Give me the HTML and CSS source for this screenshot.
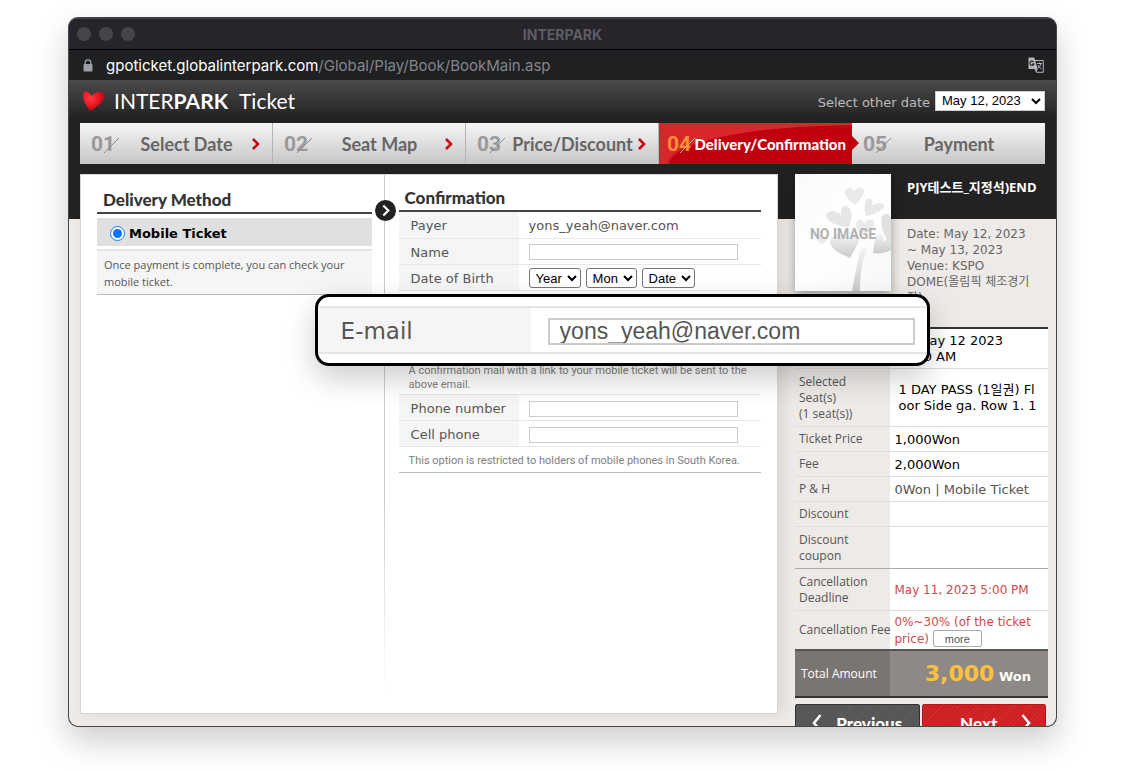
FILE: index.html
```html
<!DOCTYPE html>
<html lang="en">
<head>
<meta charset="UTF-8">
<title>INTERPARK</title>
<link rel="stylesheet" href="styles.css">
</head>
<body>
<div class="window">
	<div class="titlebar">
		<div class="dots"><i></i><i></i><i></i></div>
		<b>INTERPARK</b>
	</div>
	<div class="urlbar">
		<svg class="lock" width="10" height="13" viewBox="0 0 10 13"><path d="M2.2 6V3.6a2.8 2.8 0 0 1 5.6 0V6" fill="none" stroke="#9aa0a6" stroke-width="1.3"/><rect x="0.5" y="5" width="9" height="7.5" rx="1" fill="#9aa0a6"/></svg>
		<span class="url"><span class="domain">gpoticket.globalinterpark.com</span>/Global/Play/Book/BookMain.asp</span>
		<svg class="translate" width="16" height="16" viewBox="0 0 16 16"><path d="M7 3.5h8.3v11.8H8.5L7 12" fill="none" stroke="#b4b6b8" stroke-width="1"/><path d="M0.5 0.5h5.8l3.4 11.5H0.5z" fill="#b4b6b8"/><path d="M9.7 12L8.3 15l-1.2-3z" fill="#b4b6b8"/><path d="M5.6 4.8A2.1 2.1 0 1 0 6 7H4" fill="none" stroke="#1f2022" stroke-width="1.1"/><path d="M9 6.5h5M11.5 5.5v1M13 6.5c-.5 2-1.500 3.500-3 4.500M10 8c.8 1.800 2 3 3.500 4" fill="none" stroke="#b4b6b8" stroke-width="1"/></svg>
	</div>

	<div class="page">
		<div class="header">
			<svg class="heart" width="24" height="22" viewBox="0 0 24 22">
				<defs><radialGradient id="hg" cx="0.35" cy="0.35" r="0.75"><stop offset="0" stop-color="#ff3a40"/><stop offset="0.6" stop-color="#e3101c"/><stop offset="1" stop-color="#9c0710"/></radialGradient></defs>
				<path d="M8.500 21C4 15.500 0.500 10 1 4.500 1.300 0 6.500 0 9.500 6 12.500 2 19 0.500 22 3.500 25.500 8.500 17 15.500 8.500 21z" fill="url(#hg)"/>
			</svg>
			<div class="logo">INTER<b>PARK</b></div>
			<div class="logo-sub">Ticket</div>
			<label class="other" for="otherdate">Select other date</label>
			<select class="otherdate" id="otherdate"><option>May 12, 2023</option></select>
		</div>

		<div class="steps">
			<div class="step">
				<span class="num">01<svg width="17" height="17" viewBox="0 0 17 17"><path d="M1 16L16 1"/></svg></span>
				<span class="name">Select Date</span>
				<svg class="arrow" width="8" height="12" viewBox="0 0 8 12"><path d="M1 1l5 5-5 5"/></svg>
			</div>
			<div class="step">
				<span class="num">02<svg width="17" height="17" viewBox="0 0 17 17"><path d="M1 16L16 1"/></svg></span>
				<span class="name">Seat Map</span>
				<svg class="arrow" width="8" height="12" viewBox="0 0 8 12"><path d="M1 1l5 5-5 5"/></svg>
			</div>
			<div class="step">
				<span class="num">03<svg width="17" height="17" viewBox="0 0 17 17"><path d="M1 16L16 1"/></svg></span>
				<span class="name">Price/Discount</span>
				<svg class="arrow" width="8" height="12" viewBox="0 0 8 12"><path d="M1 1l5 5-5 5"/></svg>
			</div>
			<div class="step active">
				<span class="num">04<svg width="17" height="17" viewBox="0 0 17 17"><path d="M1 16L16 1"/></svg></span>
				<span class="name">Delivery/Confirmation</span>
			</div>
			<div class="step">
				<span class="num">05<svg width="17" height="17" viewBox="0 0 17 17"><path d="M1 16L16 1"/></svg></span>
				<span class="name">Payment</span>
			</div>
		</div>

		<div class="main">
			<div class="panel">
				<div class="delivery">
					<h2>Delivery Method</h2>
					<div class="method">
						<input type="radio" name="delivery" id="mobile" checked>
						<label for="mobile">Mobile Ticket</label>
					</div>
					<p class="method-note">Once payment is complete, you can check your mobile ticket.</p>
				</div>
				<div class="confirm">
					<svg class="next-mark" width="21" height="21" viewBox="0 0 21 21"><circle cx="10.500" cy="10.500" r="10.500" fill="#222"/><path d="M8.300 5.500l5 5-5 5" fill="none" stroke="#fff" stroke-width="2.200"/></svg>
					<h2>Confirmation</h2>
					<table class="form">
						<tr><th>Payer</th><td>yons_yeah@naver.com</td></tr>
						<tr><th><label for="uname">Name</label></th><td><input type="text" id="uname"></td></tr>
						<tr>
							<th><label for="year">Date of Birth</label></th>
							<td>
								<div class="birth">
									<select id="year"><option>Year</option></select>
									<select id="mon" aria-label="Month"><option>Mon</option></select>
									<select id="date" aria-label="Date"><option>Date</option></select>
								</div>
							</td>
						</tr>
						<tr class="email-row">
							<td colspan="2">
								<div class="callout">
									<div class="callout-row">
										<label for="email">E-mail</label>
										<div class="callout-field"><input type="text" id="email" value="yons_yeah@naver.com"></div>
									</div>
								</div>
							</td>
						</tr>
						<tr class="hint"><td colspan="2">A confirmation mail with a link to your mobile ticket will be sent to the above email.</td></tr>
						<tr><th><label for="phone">Phone number</label></th><td><input type="text" id="phone"></td></tr>
						<tr><th><label for="cell">Cell phone</label></th><td><input type="text" id="cell"></td></tr>
						<tr class="hint last"><td colspan="2">This option is restricted to holders of mobile phones in South Korea.</td></tr>
					</table>
				</div>
			</div>

			<div class="side">
				<div class="show">
					<svg class="poster" width="96" height="117" viewBox="0 0 96 117">
						<defs>
							<linearGradient id="pg" x1="0" y1="0" x2="1" y2="1"><stop offset="0" stop-color="#f9fafa"/><stop offset="0.500" stop-color="#fff"/><stop offset="1" stop-color="#f6f7f8"/></linearGradient>
							<linearGradient id="lg" x1="0" y1="0" x2="0" y2="1"><stop offset="0" stop-color="#f4f4f4"/><stop offset="1" stop-color="#c8cacb"/></linearGradient>
						</defs>
						<rect width="96" height="117" fill="url(#pg)"/>
						<path d="M57 117C61 98 62 86 67 74h6C67 86 65 100 65 117z" fill="url(#lg)"/>
						<path d="M60 31C54 27 49 21 50 17c1-4 8-4 9 1 2-6 10-5 10-1 0 5-5 10-9 14z" fill="#e9e9e9"/>
						<path d="M71 42c-2-7-2-15 1-17 4-2 7 2 5 7 4-4 12-4 12 0s-9 8-18 10z" fill="#e8e8e8"/>
						<path d="M54 53C42 53 31 47 31 41c1-5 11-5 16 1-3-7 1-12 6-9 5 4 4 12 1 20z" fill="#e6e6e6"/>
						<path d="M67 62C61 57 60 50 62 47c3-3 6-1 7 3 2-5 9-6 10-2 1 5-6 11-12 14z" fill="#eaeaea"/>
						<path d="M96 72C88 62 84 46 88 41c3-2 6-1 8 2z" fill="#e0e0e0"/>
						<path d="M26 70C22 67 21 64 23 62c2-1 4 0 5 2 2-2 5-2 5 0s-4 5-7 6z" fill="#e9e9e9"/>
						<path d="M55 84C46 80 36 76 35 68c0-8 12-11 19-3 4-6 8-7 10-4 2 5-4 14-9 23z" fill="url(#lg)"/>
						<path d="M78 79C79 66 81 59 85 60c3 0 4 4 3 8 2-2 5-3 8-2v10c-6 3-12 4-18 3z" fill="url(#lg)"/>
						<text class="noimage" x="48" y="65" text-anchor="middle">NO IMAGE</text>
					</svg>
					<div class="show-info">
						<b>PJY테스트_지정석)END</b>
						<p>Date: May 12, 2023<br>~ May 13, 2023<br>Venue: KSPO<br>DOME(올림픽 체조경기<br>장)</p>
					</div>
				</div>
				<table class="summary">
					<tr class="r-date"><th>Date</th><td>Fri, May 12 2023<br>11:00 AM</td></tr>
					<tr class="r-seat"><th>Selected<br>Seat(s)<br>(1 seat(s))</th><td>1 DAY PASS (1일권) Fl<br>oor Side ga. Row 1. 1</td></tr>
					<tr><th>Ticket Price</th><td>1,000Won</td></tr>
					<tr><th>Fee</th><td>2,000Won</td></tr>
					<tr><th>P &amp; H</th><td class="grey">0Won | Mobile Ticket</td></tr>
					<tr><th>Discount</th><td></td></tr>
					<tr class="r-two r-group"><th>Discount<br>coupon</th><td></td></tr>
					<tr class="r-two"><th>Cancellation<br>Deadline</th><td class="red">May 11, 2023 5:00 PM</td></tr>
					<tr class="r-fee"><th>Cancellation Fee</th><td class="red">0%~30% (of the ticket<br>price) <button type="button" class="more">more</button></td></tr>
					<tr class="total"><th>Total Amount</th><td><span class="amount">3,000</span> Won</td></tr>
				</table>
				<div class="buttons">
					<button type="button" class="btn prev"><svg width="10" height="18" viewBox="0 0 10 18"><path d="M8.500 1L2 9l6.500 8"/></svg>Previous</button>
					<button type="button" class="btn next">Next<svg width="10" height="18" viewBox="0 0 10 18"><path d="M1.500 1L8 9l-6.500 8"/></svg></button>
				</div>
			</div>
		</div>
	</div>
</div>
</body>
</html>
```
FILE: styles.css
```css
*{
	box-sizing: border-box;
}
body{
	margin: 0;
	height: 100vh;
	padding: 17px 68px 44px;
	background: #fff;
	font-family: "DejaVu Sans", "Noto Sans CJK KR", sans-serif;
	font-size: 12px;
	color: #555;
}
h2, p{
	margin: 0;
}
table{
	width: 100%;
	border-collapse: collapse;
}
th{
	font-weight: normal;
	text-align: left;
}
select{
	font-family: "Liberation Sans", sans-serif;
	font-size: 13px;
	background-color: #fff;
	color: #000;
}

/* browser window */
.window{
	height: 100%;
	display: flex;
	flex-direction: column;
	border: 1px solid #45474a;
	border-top: 2px solid #3f4145;
	border-radius: 10px;
	overflow: hidden;
	background: #222;
	box-shadow: 0 14px 32px rgba(0,0,0,0.2);
}
.titlebar{
	position: relative;
	height: 31px;
	flex: none;
	display: flex;
	align-items: center;
	justify-content: center;
	background: #27242b;
	border-bottom: 1px solid #000;
	font-family: Inter, sans-serif;
	font-size: 14px;
	color: #5e5c63;
}
.dots{
	position: absolute;
	left: 8px;
	display: flex;
	gap: 8px;
}
.dots i{
	width: 14px;
	height: 14px;
	border-radius: 50%;
	background: #47444b;
}
.urlbar{
	height: 30px;
	flex: none;
	display: flex;
	align-items: center;
	gap: 13px;
	padding: 0 12px 0 14px;
	background: #1f2022;
	font-family: Inter, sans-serif;
	font-size: 15px;
	color: #84868a;
}
.domain{
	color: #fff;
}
.translate{
	margin-left: auto;
}

/* page */
.page{
	flex: 1;
	min-height: 0;
	display: flex;
	flex-direction: column;
	background: linear-gradient(#222 139px, #eeeae7 139px);
}
.header{
	height: 43px;
	flex: none;
	display: flex;
	align-items: center;
	padding: 0 11px 2px 13px;
	background: linear-gradient(#4a4a4a, #222 90%);
	color: #fff;
}
.logo, .logo-sub{
	font-family: Lato, sans-serif;
	font-size: 21px;
	margin-left: 8px;
}
.logo-sub{
	margin-left: 11px;
}
.other{
	margin-left: auto;
	margin-right: 5px;
	padding-top: 4px;
	font-size: 13px;
	color: #bbb;
}
.otherdate{
	width: 110px;
	height: 20px;
	padding: 0 0 0 2px;
	border: 1px solid #ccc;
	border-radius: 0;
}
.steps{
	flex: none;
	height: 41px;
	margin: 0 11px;
	display: grid;
	grid-template-columns: repeat(5, minmax(0, 1fr));
}
.step{
	position: relative;
	display: grid;
	grid-template-columns: 30px 1fr 8px;
	align-items: center;
	gap: 0 4px;
	padding: 0 12px 0 11px;
	background: linear-gradient(#f6f6f6, #c6c6c6);
	border-right: 1px solid #b4b4b4;
}
.step:last-child{
	border-right: none;
}
.num{
	font-family: Roboto, sans-serif;
	font-weight: bold;
	font-size: 21px;
	color: #999;
	display: flex;
	align-items: center;
}
.num svg{
	flex: none;
	margin-left: -12px;
	margin-top: 3px;
}
.num path{
	stroke: #888;
}
.name{
	font-family: Lato, sans-serif;
	font-weight: bold;
	font-size: 18px;
	text-align: center;
	white-space: nowrap;
	color: #666;
}
.arrow path{
	fill: none;
	stroke: #c8000f;
	stroke-width: 2.5;
}
.active{
	grid-template-columns: 27px 1fr;
	gap: 0;
	padding: 0 6px 0 8px;
	background: radial-gradient(ellipse 185px 39px at 100% 100%, #c0000f 98%, transparent 100%), #d8262c;
	border-right: none;
}
.active .num{
	color: #ff8f33;
}
.active .num path{
	stroke: #ffb46e;
}
.active .name{
	font-size: 15px;
	font-weight: 900;
	color: #fff;
	text-align: right;
}
.active::after{
	content: "";
	position: absolute;
	z-index: 1;
	left: 100%;
	top: 13px;
	border: 7px solid transparent;
	border-left-color: #c0000f;
	border-right: none;
}

/* content */
.main{
	flex: 1;
	min-height: 0;
	display: grid;
	grid-template-columns: 1fr 253px;
	grid-template-rows: minmax(0, 1fr);
	gap: 17px;
	padding: 10px 8px 12px 11px;
}
.panel{
	display: grid;
	grid-template-columns: 10fr 13fr;
	background: #fff;
	border: 1px solid #d9d8d6;
	box-shadow: 6px 0 12px rgba(0,0,0,0.08);
}
h2{
	font-family: Lato, sans-serif;
	font-weight: 900;
	font-size: 17px;
	line-height: 20px;
	color: #333;
}
.delivery{
	padding: 15px 12px 0 16px;
}
.delivery h2{
	padding: 0 6px 2px;
	border-bottom: 2px solid #444;
}
.method{
	display: flex;
	align-items: center;
	gap: 4px;
	height: 28px;
	margin-top: 4px;
	padding: 2px 0 0 13px;
	background: #e0e0e0;
	font-size: 13px;
	font-weight: bold;
	color: #000;
}
.method input{
	width: 15px;
	height: 15px;
	margin: 0;
	accent-color: #0a75ff;
}
.method-note{
	margin-top: 3px;
	padding: 5px 7px 4px;
	border-top: 2px solid #e4e4e4;
	border-bottom: 1px solid #bbb;
	background: #f5f5f5;
	font-family: "Open Sans", sans-serif;
	font-size: 11px;
	line-height: 17px;
}
.confirm{
	position: relative;
	padding: 13px 16px 0 14px;
	border-left: 1px solid;
	border-image: linear-gradient(#ccc 60%, #fff 96%) 1;
}
.next-mark{
	position: absolute;
	left: -10px;
	top: 25px;
}
.confirm h2{
	padding: 0 6px 2px;
	border-bottom: 2px solid #444;
}
.form tr{
	height: 26px;
	border-bottom: 1px solid #e6e6e6;
}
.form th{
	width: 120px;
	padding: 2px 12px 0;
	background: #f5f5f5;
	font-size: 13px;
}
.form td{
	padding: 2px 0 0 10px;
	font-size: 13px;
}
.form td > input{
	display: block;
	width: 209px;
	height: 16px;
	border: 1px solid #ccc;
}
.birth{
	display: flex;
	gap: 5px;
}
.birth select{
	height: 20px;
	padding: 0 1px 0 2px;
	border: 1px solid #767676;
	border-radius: 3px;
}
.form .email-row{
	height: 70px;
	border: none;
}
.form .hint td{
	padding: 4px 0 2px 10px;
	font-family: Roboto, sans-serif;
	font-size: 11px;
	line-height: 14px;
	color: #808080;
}
.form .last{
	border-bottom: 1px solid #bbb;
}

/* magnified e-mail row, lies over both columns */
.callout{
	position: absolute;
	z-index: 2;
	left: -70px;
	right: -153px;
	top: 119px;
	height: 72px;
	padding: 9px 0;
	border: 3px solid #000;
	border-radius: 14px;
	background: #fff;
	box-shadow: 0 12px 30px rgba(0,0,0,0.2);
}
.callout-row{
	display: grid;
	grid-template-columns: 213px 1fr;
	height: 48px;
	border: solid #e4e4e4;
	border-width: 2px 0;
}
.callout-row label{
	padding: 2px 0 0 23px;
	line-height: 42px;
	background: #f5f5f5;
	font-size: 23px;
}
.callout-field{
	display: flex;
	align-items: center;
	padding: 2px 12px 0 17px;
}
.callout-field input{
	width: 100%;
	height: 27px;
	padding: 0 10px;
	border: 2px solid #ccc;
	font-family: "Liberation Sans", sans-serif;
	font-size: 23px;
	color: #555;
}

/* right column */
.show{
	display: flex;
	gap: 16px;
	height: 153px;
}
.poster{
	flex: none;
	box-shadow: 0 4px 10px rgba(0,0,0,0.35);
}
.noimage{
	font-family: Roboto, sans-serif;
	font-size: 14px;
	font-weight: bold;
	fill: #b0b1b3;
}
.show-info b{
	display: block;
	height: 52px;
	padding-top: 5px;
	font-family: "Open Sans", "Noto Sans CJK KR", sans-serif;
	font-size: 13px;
	line-height: 17px;
	color: #fff;
}
.show-info p{
	line-height: 16px;
	color: #666;
}
.summary{
	border-top: 2px solid #333;
	font-size: 13px;
	line-height: 16px;
}
.summary tr{
	height: 25px;
	border-bottom: 1px solid #ddd;
}
.summary th{
	width: 94px;
	padding: 1px 0 0 4px;
	font-family: "Open Sans", sans-serif;
	font-size: 12px;
	white-space: nowrap;
}
.summary td{
	padding: 2px 0 0 4px;
	background: #fff;
	color: #000;
}
.summary .r-date{
	height: 40px;
}
.summary .r-seat{
	height: 58px;
}
.summary .r-seat td{
	padding-left: 8px;
}
.summary .r-two{
	height: 42px;
}
.summary .r-fee{
	height: 40px;
}
.summary .r-group{
	border-bottom-color: #aaa;
}
.summary .grey{
	color: #555;
}
.summary .red{
	font-size: 12px;
	color: #d2484c;
}
.more{
	width: 49px;
	height: 17px;
	padding: 0;
	border: 1px solid #aaa;
	border-radius: 2px;
	background: #fff;
	font-family: "Liberation Sans", sans-serif;
	font-size: 11px;
	line-height: 14px;
	color: #555;
}
.summary .total{
	height: 47px;
	border-top: 2px solid #555;
	border-bottom: 2px solid #333;
}
.total th{
	padding-left: 6px;
	background: #7a7573;
	color: #fff;
}
.summary .total td{
	padding: 4px 17px 0 0;
	background: #8e8987;
	text-align: right;
	font-weight: bold;
	color: #fff;
}
.amount{
	font-size: 22px;
	color: #ffc13b;
}
.buttons{
	display: grid;
	grid-template-columns: 1fr 1fr;
	gap: 2px;
	margin: 6px 2px 0 0;
}
.btn{
	display: flex;
	align-items: center;
	justify-content: center;
	gap: 14px;
	height: 38px;
	border: 1px solid #333;
	border-radius: 2px;
	background: repeating-linear-gradient(135deg, #555 0 2px, #5c5c5c 2px 3px);
	font-family: Lato, sans-serif;
	font-weight: 900;
	font-size: 17px;
	color: #fff;
}
.btn path{
	fill: none;
	stroke: #fff;
	stroke-width: 2.5;
}
.next{
	gap: 24px;
	padding-left: 30px;
	border-color: #b8141a;
	background: repeating-linear-gradient(135deg, #cc1f24 0 2px, #d42a2e 2px 3px);
}
```
